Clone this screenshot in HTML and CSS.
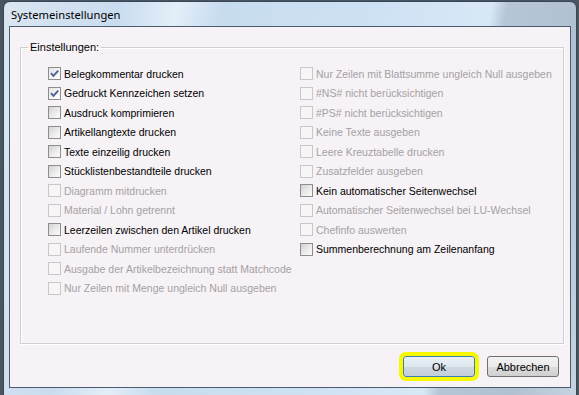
FILE: index.html
```html
<!DOCTYPE html>
<html lang="de">
<head>
  <meta charset="UTF-8">
  <meta name="viewport" content="width=device-width, initial-scale=1.0">
  <title>Systemeinstellungen</title>
  <link rel="stylesheet" href="styles.css">
</head>
<body>
  <div class="window">
    <div class="titlebar"><span class="title">Systemeinstellungen</span></div>
    <div class="client">
      <fieldset class="group">
        <legend>Einstellungen:</legend>
        <div class="columns">
          <div class="col">
            <div class="row"><span class="box checked"><svg viewBox="0 0 11 11"><path d="M2 5.2 L4.4 7.8 L9.2 2.6"/></svg></span>Belegkommentar drucken</div>
            <div class="row"><span class="box checked"><svg viewBox="0 0 11 11"><path d="M2 5.2 L4.4 7.8 L9.2 2.6"/></svg></span>Gedruckt Kennzeichen setzen</div>
            <div class="row"><span class="box"></span>Ausdruck komprimieren</div>
            <div class="row"><span class="box"></span>Artikellangtexte drucken</div>
            <div class="row"><span class="box"></span>Texte einzeilig drucken</div>
            <div class="row"><span class="box"></span>Stücklistenbestandteile drucken</div>
            <div class="row off"><span class="box"></span>Diagramm mitdrucken</div>
            <div class="row off"><span class="box"></span>Material / Lohn getrennt</div>
            <div class="row"><span class="box"></span>Leerzeilen zwischen den Artikel drucken</div>
            <div class="row off"><span class="box"></span>Laufende Nummer unterdrücken</div>
            <div class="row off"><span class="box"></span>Ausgabe der Artikelbezeichnung statt Matchcode</div>
            <div class="row off"><span class="box"></span>Nur Zeilen mit Menge ungleich Null ausgeben</div>
          </div>
          <div class="col">
            <div class="row off"><span class="box"></span>Nur Zeilen mit Blattsumme ungleich Null ausgeben</div>
            <div class="row off"><span class="box"></span>#NS# nicht berücksichtigen</div>
            <div class="row off"><span class="box"></span>#PS# nicht berücksichtigen</div>
            <div class="row off"><span class="box"></span>Keine Texte ausgeben</div>
            <div class="row off"><span class="box"></span>Leere Kreuztabelle drucken</div>
            <div class="row off"><span class="box"></span>Zusatzfelder ausgeben</div>
            <div class="row"><span class="box"></span>Kein automatischer Seitenwechsel</div>
            <div class="row off"><span class="box"></span>Automatischer Seitenwechsel bei LU-Wechsel</div>
            <div class="row off"><span class="box"></span>Chefinfo auswerten</div>
            <div class="row"><span class="box"></span>Summenberechnung am Zeilenanfang</div>
          </div>
        </div>
      </fieldset>
      <div class="buttons">
        <button class="btn default">Ok</button>
        <button class="btn">Abbrechen</button>
      </div>
    </div>
  </div>
</body>
</html>
```

FILE: styles.css
```css
*{
  margin: 0px;
  padding: 0px;
  box-sizing: border-box;
}
body{
  width: 579px;
  height: 395px;
  overflow: hidden;
  background-color: #4b5560;
  font-family: "Liberation Sans", Arial, sans-serif;
  font-size: 10.5px;
}
.window{
  margin: 1px 2px 0 3px;
  height: 400px;
  border: 1px solid #34475a;
  border-radius: 7px 7px 0 0;
  padding: 0 5px;
  background: linear-gradient(100deg, #dbe6f1 0%, #c9dcef 18%, #e4eef8 27%, #c8dcf0 34%, #cee1f4 58%, #d9e8f6 76%, #b7c6d6 78.5%, #b2c1d1 90%, #c6d4e1 100%);
}
.titlebar{
  height: 24px;
  display: flex;
  align-items: center;
  padding-left: 2px;
}
.title{
  font-family: "Noto Sans", sans-serif;
  font-size: 11.2px;
  color: #000;
}
.client{
  width: 562px;
  height: 362px;
  border: 1px solid #4a5d70;
  background-color: #f6f2f5;
  display: flex;
  flex-direction: column;
}
.group{
  margin: 14px 6px 0 10px;
  height: 303px;
  border: 1px solid #d2ced2;
  box-shadow: inset 1px 1px 0 #fff, 1px 1px 0 #fff;
  padding: 11px 0 0 27px;
}
.group legend{
  margin-left: -20px;
  padding: 0 2px;
  line-height: 12px;
  font-size: 11px;
  color: #000;
}
.columns{
  display: grid;
  grid-template-columns: 252px 1fr;
}
.row{
  height: 19.5px;
  display: flex;
  align-items: center;
  white-space: nowrap;
  color: #000;
}
.row.off{
  color: #a5a1a5;
}
.box{
  width: 13px;
  height: 13px;
  margin-right: 3px;
  flex-shrink: 0;
  border: 1px solid #8d8d8d;
  background: linear-gradient(135deg, #d2d2d2 0%, #ececec 55%, #fbfbfb 100%);
}
.box.checked{
  background: linear-gradient(135deg, #e2e2e2 0%, #f6f6f6 60%, #fff 100%);
}
.row.off .box{
  border-color: #cac6ca;
  background: #f8f5f7;
}
.box svg{
  display: block;
  width: 11px;
  height: 11px;
}
.box path{
  fill: none;
  stroke: #4d5f96;
  stroke-width: 1.9;
}
.buttons{
  display: flex;
  justify-content: flex-end;
  gap: 12px;
  margin-top: 12px;
  padding-right: 11px;
}
.btn{
  width: 72px;
  height: 21px;
  border: 1px solid #707070;
  border-radius: 3px;
  background: linear-gradient(#f2f2f2 0%, #ebebeb 50%, #dddddd 51%, #cfcfcf 100%);
  font-family: "Liberation Sans", Arial, sans-serif;
  font-size: 11px;
  color: #000;
}
.btn.default{
  border-color: #3c7fb1;
  background: linear-gradient(#eaf1f6 0%, #dde7ee 50%, #cfd9e2 51%, #c3ced8 100%);
  outline: 4px solid #f8f800;
  outline-offset: 0;
}
```
